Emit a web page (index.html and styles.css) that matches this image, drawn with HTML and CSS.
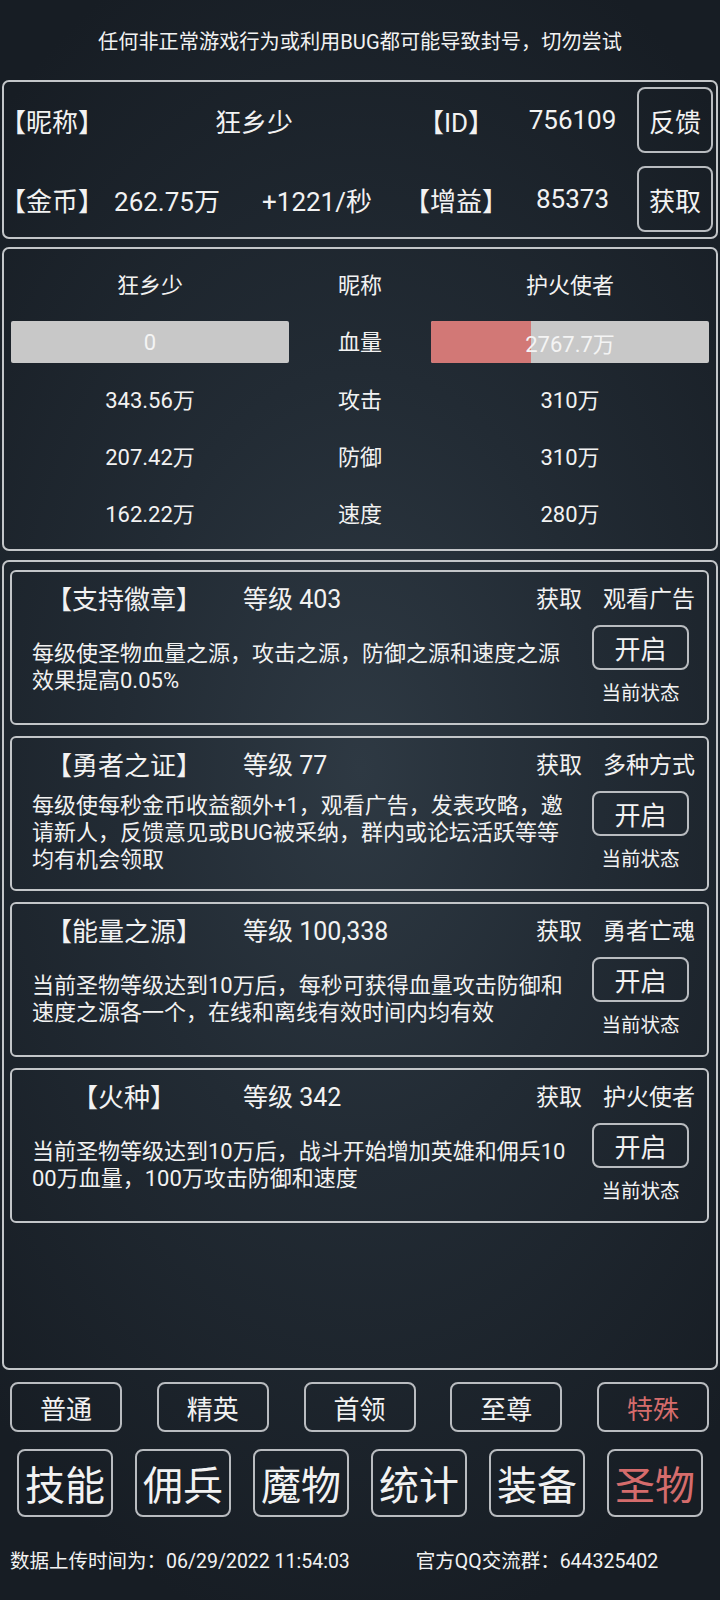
FILE: index.html
```html
<!DOCTYPE html>
<html lang="zh-CN">
<head>
  <meta charset="UTF-8">
  <meta name="viewport" content="width=720, initial-scale=1.0">
  <title>圣物</title>
  <link rel="stylesheet" href="styles.css">
</head>
<body>
<div class="page">

  <div class="notice">任何非正常游戏行为或利用BUG都可能导致封号，切勿尝试</div>

  <div class="box info">
    <span class="lbl">【昵称】</span>
    <span class="val name">狂乡少</span>
    <span class="val">【ID】</span>
    <span class="val">756109</span>
    <button class="btn small">反馈</button>

    <span class="lbl">【金币】</span>
    <span class="val">262.75万</span>
    <span class="val">+1221/秒</span>
    <span class="val">【增益】</span>
    <span class="val">85373</span>
    <button class="btn small">获取</button>
  </div>

  <div class="box battle">
    <span>狂乡少</span><span>昵称</span><span>护火使者</span>

    <div class="bar"><span class="bar-text">0</span></div>
    <span>血量</span>
    <div class="bar"><div class="bar-fill" style="width: 36%"></div><span class="bar-text">2767.7万</span></div>

    <span>343.56万</span><span>攻击</span><span>310万</span>
    <span>207.42万</span><span>防御</span><span>310万</span>
    <span>162.22万</span><span>速度</span><span>280万</span>
  </div>

  <div class="box relics">

    <div class="card">
      <div class="card-head">
        <span class="relic-name">【支持徽章】</span>
        <span class="level">等级 403</span>
        <span class="get">获取</span>
        <span class="source">观看广告</span>
      </div>
      <div class="card-body">
        <p class="desc">每级使圣物血量之源，攻击之源，防御之源和速度之源效果提高0.05%</p>
        <div class="state">
          <button class="btn toggle">开启</button>
          <span class="state-lbl">当前状态</span>
        </div>
      </div>
    </div>

    <div class="card">
      <div class="card-head">
        <span class="relic-name">【勇者之证】</span>
        <span class="level">等级 77</span>
        <span class="get">获取</span>
        <span class="source">多种方式</span>
      </div>
      <div class="card-body">
        <p class="desc">每级使每秒金币收益额外+1，观看广告，发表攻略，邀请新人，反馈意见或BUG被采纳，群内或论坛活跃等等均有机会领取</p>
        <div class="state">
          <button class="btn toggle">开启</button>
          <span class="state-lbl">当前状态</span>
        </div>
      </div>
    </div>

    <div class="card">
      <div class="card-head">
        <span class="relic-name">【能量之源】</span>
        <span class="level">等级 100,338</span>
        <span class="get">获取</span>
        <span class="source">勇者亡魂</span>
      </div>
      <div class="card-body">
        <p class="desc">当前圣物等级达到10万后，每秒可获得血量攻击防御和速度之源各一个，在线和离线有效时间内均有效</p>
        <div class="state">
          <button class="btn toggle">开启</button>
          <span class="state-lbl">当前状态</span>
        </div>
      </div>
    </div>

    <div class="card">
      <div class="card-head">
        <span class="relic-name">【火种】</span>
        <span class="level">等级 342</span>
        <span class="get">获取</span>
        <span class="source">护火使者</span>
      </div>
      <div class="card-body">
        <p class="desc">当前圣物等级达到10万后，战斗开始增加英雄和佣兵1000万血量，100万攻击防御和速度</p>
        <div class="state">
          <button class="btn toggle">开启</button>
          <span class="state-lbl">当前状态</span>
        </div>
      </div>
    </div>

  </div>

  <div class="tabs">
    <button class="btn tab">普通</button>
    <button class="btn tab">精英</button>
    <button class="btn tab">首领</button>
    <button class="btn tab">至尊</button>
    <button class="btn tab active">特殊</button>
  </div>

  <div class="nav">
    <button class="btn big">技能</button>
    <button class="btn big">佣兵</button>
    <button class="btn big">魔物</button>
    <button class="btn big">统计</button>
    <button class="btn big">装备</button>
    <button class="btn big active">圣物</button>
  </div>

  <div class="footer">
    <span>数据上传时间为：06/29/2022 11:54:03</span>
    <span>官方QQ交流群：644325402</span>
  </div>

</div>
</body>
</html>
```

FILE: styles.css
```css
* {
  box-sizing: border-box;
}

body {
  margin: 0;
  background: #161c22;
  color: #f2f2f2;
  font-family: Roboto, "Noto Sans CJK SC", sans-serif;
}

.page {
  width: 720px;
  height: 1600px;
  overflow: hidden;
  background: radial-gradient(ellipse 75% 55% at 50% 48%, #2e3943 0%, #222b34 45%, #171d24 100%);
}

.notice {
  height: 80px;
  display: flex;
  align-items: center;
  justify-content: center;
  font-size: 20.2px;
}

.box {
  margin: 0 2px;
  border: 2px solid #c3c6c9;
  border-radius: 7px;
}

.btn {
  font-family: inherit;
  color: #f2f2f2;
  background: transparent;
  border: 2px solid #b9bcc0;
  border-radius: 8px;
  padding: 0;
}

/* info box */
.info {
  height: 159px;
  display: grid;
  grid-template-columns: 100px 126px 174px 104px 1fr 76px;
  grid-template-rows: 66px 66px;
  row-gap: 13px;
  padding: 5px 3px 4px 0;
  align-items: center;
  font-size: 26px;
}

.info .lbl {
  margin-left: -4px;
}

.info .val {
  text-align: center;
}

.info .name {
  grid-column: span 2;
}

.btn.small {
  height: 66px;
  font-size: 26px;
}

/* battle */
.battle {
  height: 304px;
  margin-top: 8px;
  display: grid;
  grid-template-columns: 278px 1fr 278px;
  grid-template-rows: 56px 58px 57px 57px 57px;
  padding: 6px 7px 0;
  align-items: center;
  text-align: center;
  font-size: 22px;
}

.bar {
  position: relative;
  height: 42px;
  margin-top: 4px;
  background: #c8c8c8;
  border-radius: 2px;
  overflow: hidden;
  display: flex;
  align-items: center;
  justify-content: center;
}

.bar-fill {
  position: absolute;
  left: 0;
  top: 0;
  bottom: 0;
  background: #d27876;
}

.bar-text {
  position: relative;
  color: #f4f4f4;
}

/* relics */
.relics {
  height: 810px;
  margin-top: 9px;
  padding: 8px 7px 0 6px;
  display: flex;
  flex-direction: column;
  gap: 11px;
}

.card {
  height: 155px;
  border: 2px solid #c3c6c9;
  border-radius: 6px;
  display: flex;
  flex-direction: column;
}

.card-head {
  height: 50px;
  display: flex;
  align-items: center;
}

.relic-name {
  width: 210px;
  margin-left: 7px;
  text-align: center;
  font-size: 26px;
}

.level {
  margin-left: 14px;
  flex: 1;
  font-size: 25px;
}

.get {
  font-size: 23px;
}

.source {
  width: 94px;
  margin: 0 11px 0 20px;
  text-align: center;
  font-size: 23px;
}

.card-body {
  flex: 1;
  display: flex;
}

.desc {
  margin: 0 0 12px 20px;
  width: 540px;
  align-self: center;
  font-size: 22px;
  line-height: 27px;
  word-break: break-all;
}

.state {
  margin: 3px 0 0 20px;
  width: 97px;
  display: flex;
  flex-direction: column;
  align-items: center;
}

.btn.toggle {
  width: 97px;
  height: 45px;
  font-size: 26px;
}

.state-lbl {
  margin-top: 7px;
  font-size: 19.5px;
}

/* bottom buttons */
.tabs {
  margin-top: 12px;
  padding: 0 11px 0 10px;
  display: flex;
  justify-content: space-between;
}

.btn.tab {
  width: 112px;
  height: 50px;
  font-size: 26px;
}

.nav {
  margin-top: 17px;
  padding: 0 17px;
  display: flex;
  justify-content: space-between;
}

.btn.big {
  width: 96px;
  height: 68px;
  font-size: 40px;
}

.btn.active {
  color: #d56c6c;
}

.footer {
  margin-top: 28px;
  padding-left: 10px;
  display: flex;
  gap: 66px;
  font-size: 19.5px;
}
```
